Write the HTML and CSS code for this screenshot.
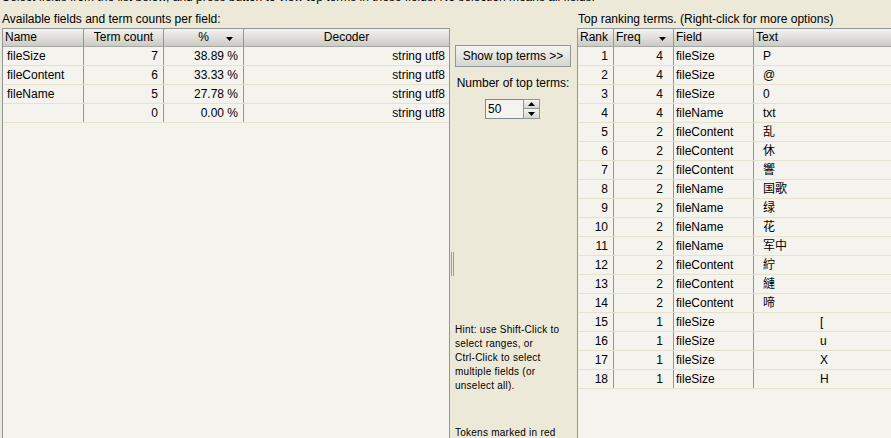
FILE: index.html
```html
<!DOCTYPE html>
<html>
<head>
<meta charset="utf-8">
<title>Top terms</title>
<link rel="stylesheet" href="styles.css">
</head>
<body>
<div class="note">Select fields from the list below, and press button to view top terms in these fields. No selection means all fields.</div>
<div class="main">
  <section class="left">
    <div class="title">Available fields and term counts per field:</div>
    <div class="pane">
      <div class="head fields">
        <div class="hc">Name</div>
        <div class="hc center">Term count</div>
        <div class="hc center">%<svg class="arrow arrow-pct" width="7" height="4" viewBox="0 0 7 4"><polygon points="0,0 7,0 3.5,4" fill="#000"/></svg></div>
        <div class="hc center last">Decoder</div>
      </div>
      <div class="row fields"><div class="c name">fileSize</div><div class="c num">7</div><div class="c num">38.89 %</div><div class="c dec last">string utf8</div></div>
      <div class="row fields"><div class="c name">fileContent</div><div class="c num">6</div><div class="c num">33.33 %</div><div class="c dec last">string utf8</div></div>
      <div class="row fields"><div class="c name">fileName</div><div class="c num">5</div><div class="c num">27.78 %</div><div class="c dec last">string utf8</div></div>
      <div class="row fields"><div class="c name"></div><div class="c num">0</div><div class="c num">0.00 %</div><div class="c dec last">string utf8</div></div>
    </div>
  </section>

  <section class="middle">
    <div class="grip"><span></span></div>
    <div class="controls">
      <button class="btn" type="button">Show top terms &gt;&gt;</button>
      <div class="label">Number of top terms:</div>
      <div class="spinner">
        <div class="spin-field">50</div>
        <div class="spin-btns">
          <span><svg width="7" height="4" viewBox="0 0 7 4"><polygon points="3.5,0 7,4 0,4" fill="#000"/></svg></span>
          <span><svg width="7" height="4" viewBox="0 0 7 4"><polygon points="0,0 7,0 3.5,4" fill="#000"/></svg></span>
        </div>
      </div>
      <p class="hint">Hint: use Shift-Click to<br>select ranges, or<br>Ctrl-Click to select<br>multiple fields (or<br>unselect all).</p>
      <p class="hint tokens">Tokens marked in red</p>
    </div>
  </section>

  <section class="right">
    <div class="title">Top ranking terms. (Right-click for more options)</div>
    <div class="pane">
      <div class="head terms">
        <div class="hc">Rank</div>
        <div class="hc">Freq<svg class="arrow arrow-freq" width="7" height="4" viewBox="0 0 7 4"><polygon points="0,0 7,0 3.5,4" fill="#000"/></svg></div>
        <div class="hc">Field</div>
        <div class="hc last">Text</div>
      </div>
      <div class="row terms"><div class="c rank">1</div><div class="c freq">4</div><div class="c fld">fileSize</div><div class="c txt last">P</div></div>
      <div class="row terms"><div class="c rank">2</div><div class="c freq">4</div><div class="c fld">fileSize</div><div class="c txt last">@</div></div>
      <div class="row terms"><div class="c rank">3</div><div class="c freq">4</div><div class="c fld">fileSize</div><div class="c txt last">0</div></div>
      <div class="row terms"><div class="c rank">4</div><div class="c freq">4</div><div class="c fld">fileName</div><div class="c txt last">txt</div></div>
      <div class="row terms"><div class="c rank">5</div><div class="c freq">2</div><div class="c fld">fileContent</div><div class="c txt last">乱</div></div>
      <div class="row terms"><div class="c rank">6</div><div class="c freq">2</div><div class="c fld">fileContent</div><div class="c txt last">休</div></div>
      <div class="row terms"><div class="c rank">7</div><div class="c freq">2</div><div class="c fld">fileContent</div><div class="c txt last">響</div></div>
      <div class="row terms"><div class="c rank">8</div><div class="c freq">2</div><div class="c fld">fileName</div><div class="c txt last">国歌</div></div>
      <div class="row terms"><div class="c rank">9</div><div class="c freq">2</div><div class="c fld">fileName</div><div class="c txt last">绿</div></div>
      <div class="row terms"><div class="c rank">10</div><div class="c freq">2</div><div class="c fld">fileName</div><div class="c txt last">花</div></div>
      <div class="row terms"><div class="c rank">11</div><div class="c freq">2</div><div class="c fld">fileName</div><div class="c txt last">军中</div></div>
      <div class="row terms"><div class="c rank">12</div><div class="c freq">2</div><div class="c fld">fileContent</div><div class="c txt last">紵</div></div>
      <div class="row terms"><div class="c rank">13</div><div class="c freq">2</div><div class="c fld">fileContent</div><div class="c txt last">縺</div></div>
      <div class="row terms"><div class="c rank">14</div><div class="c freq">2</div><div class="c fld">fileContent</div><div class="c txt last">啼</div></div>
      <div class="row terms"><div class="c rank">15</div><div class="c freq">1</div><div class="c fld">fileSize</div><div class="c txt far last">[</div></div>
      <div class="row terms"><div class="c rank">16</div><div class="c freq">1</div><div class="c fld">fileSize</div><div class="c txt far last">u</div></div>
      <div class="row terms"><div class="c rank">17</div><div class="c freq">1</div><div class="c fld">fileSize</div><div class="c txt far last">X</div></div>
      <div class="row terms"><div class="c rank">18</div><div class="c freq">1</div><div class="c fld">fileSize</div><div class="c txt far last">H</div></div>
    </div>
  </section>
</div>
</body>
</html>
```

FILE: styles.css
```css
html, body {
  margin: 0;
  padding: 0;
  height: 438px;
  overflow: hidden;
}

body {
  background: #ece9d8;
  font-family: "Liberation Sans", "Noto Sans CJK SC", sans-serif;
  font-size: 12px;
  color: #000;
}

.note {
  margin-top: -10px;
  height: 14px;
  line-height: 14px;
  padding-left: 2px;
  white-space: nowrap;
}

.main {
  display: flex;
  height: 434px;
}

.left {
  width: 448px;
  margin-left: 2px;
  display: flex;
  flex-direction: column;
}

.right {
  flex: 1;
  min-width: 0;
  display: flex;
  flex-direction: column;
}

.title {
  margin-top: 8px;
  height: 14px;
  line-height: 14px;
  white-space: nowrap;
}

.right .title {
  padding-left: 1px;
}

.pane {
  margin-top: 2px;
  flex: 1;
  background: #f4f3ee;
  border: 1px solid #8f9898;
  border-bottom: none;
}

.right .pane {
  border-right: none;
}

.head,
.row {
  display: grid;
  box-sizing: border-box;
}

.fields {
  grid-template-columns: 81px 80px 80px 1fr;
}

.terms {
  grid-template-columns: 36px 60px 80px 1fr;
}

.head {
  height: 18px;
  background: linear-gradient(#f4f3f0, #cbcac3);
  border-bottom: 1px solid #a4a9a5;
}

.hc {
  position: relative;
  box-sizing: border-box;
  border-right: 1px solid #8f9898;
  line-height: 17px;
  padding-left: 2px;
  white-space: nowrap;
  overflow: hidden;
}

.hc.center {
  text-align: center;
  padding-left: 0;
}

.hc.last,
.c.last {
  border-right: none;
}

.arrow {
  position: absolute;
  top: 8px;
}

.arrow-pct {
  right: 10px;
}

.arrow-freq {
  right: 7px;
}

.row {
  height: 19px;
  border-bottom: 1px solid #e6e2cd;
}

.c {
  box-sizing: border-box;
  border-right: 1px solid #8f9898;
  line-height: 18px;
  white-space: nowrap;
  overflow: hidden;
}

.name {
  padding-left: 4px;
}

.num {
  text-align: right;
  padding-right: 5px;
}

.dec {
  text-align: right;
  padding-right: 4px;
}

.rank {
  text-align: right;
  padding-right: 5px;
}

.freq {
  text-align: right;
  padding-right: 10px;
}

.fld {
  padding-left: 2px;
}

.txt {
  padding-left: 9px;
}

.txt.far {
  padding-left: 66px;
}

/* middle column */
.middle {
  width: 127px;
  display: flex;
}

.grip {
  width: 5px;
}

.grip span {
  display: block;
  width: 1px;
  height: 24px;
  margin: 248px 0 0 1px;
  border-left: 1px solid #9d9d98;
  border-right: 1px solid #9d9d98;
}

.controls {
  width: 116px;
  padding-top: 41px;
}

.btn {
  display: block;
  width: 116px;
  height: 22px;
  margin: 0;
  padding: 0;
  border: 1px solid #8f9898;
  background: linear-gradient(#f4f4f2, #d6d6d0);
  font-family: "Liberation Sans", sans-serif;
  font-size: 12px;
  color: #000;
}

.label {
  margin-top: 9px;
  height: 14px;
  line-height: 14px;
  text-align: center;
  white-space: nowrap;
}

.spinner {
  display: flex;
  margin: 9px 0 0 30px;
  height: 20px;
}

.spin-field {
  width: 38px;
  box-sizing: border-box;
  border: 1px solid #7f8a8a;
  border-right: none;
  background: #f4f3ee;
  padding-left: 2px;
  line-height: 18px;
}

.spin-btns {
  width: 17px;
  display: flex;
  flex-direction: column;
}

.spin-btns span {
  height: 10px;
  box-sizing: border-box;
  border: 1px solid #8f9898;
  background: linear-gradient(#f4f4f2, #d6d6d0);
  display: flex;
  align-items: center;
  justify-content: center;
}

.spin-btns span + span {
  border-top: none;
}

.hint {
  margin: 204px 0 0;
  font-size: 10px;
  line-height: 14px;
  letter-spacing: 0.25px;
  white-space: nowrap;
}

.hint.tokens {
  margin-top: 33px;
}
```
